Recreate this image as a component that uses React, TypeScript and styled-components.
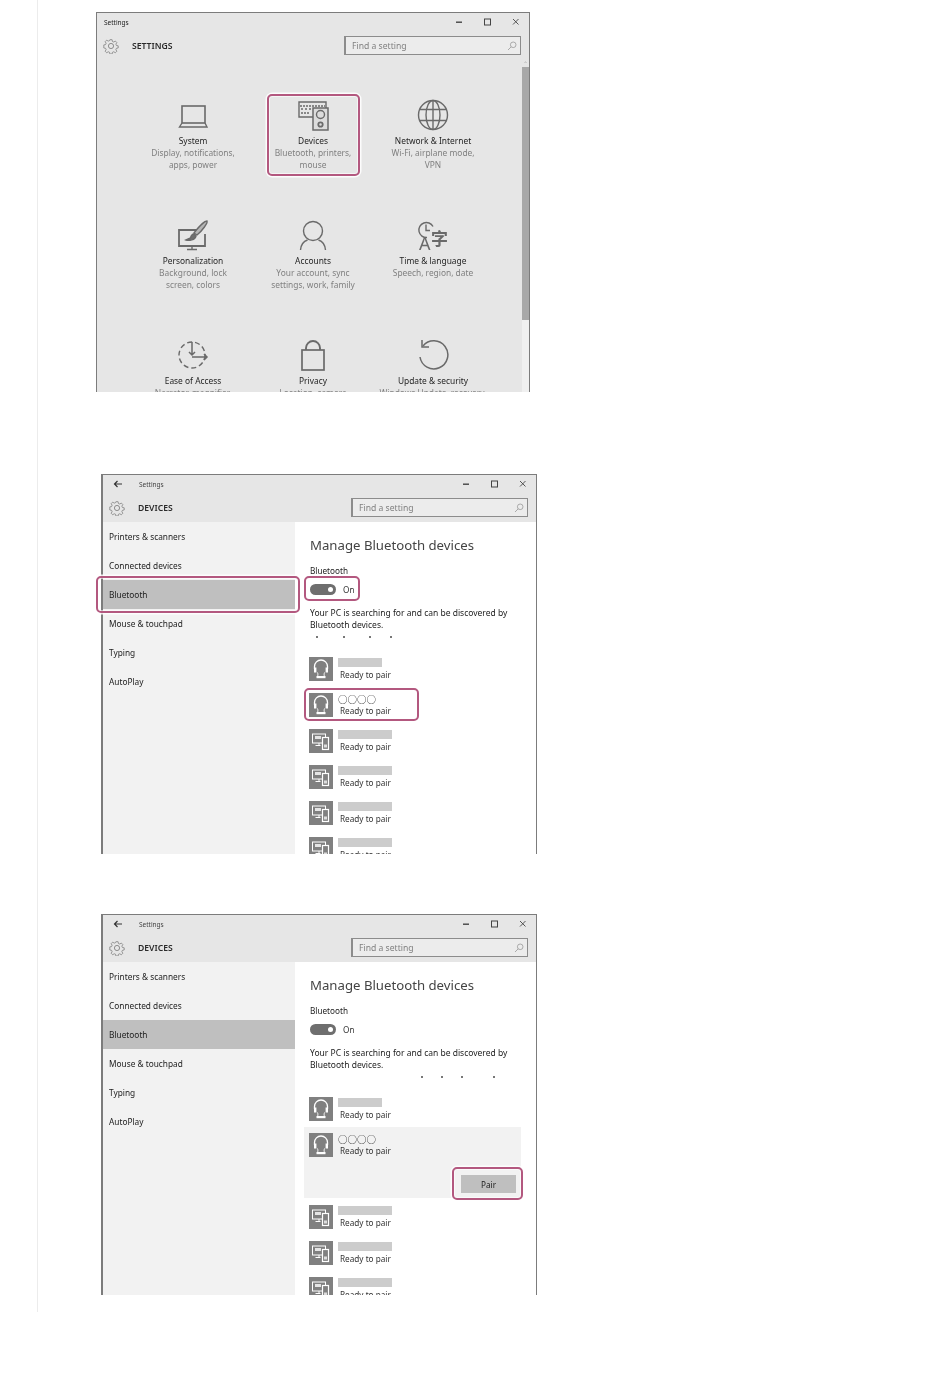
import styled, { createGlobalStyle } from "styled-components";
import { ReactNode } from "react";

const accent = "#b3587f";

const GlobalStyle = createGlobalStyle`
  * {
    box-sizing: border-box;
  }

  html,
  body {
    margin: 0;
    background: #fff;
    font-family: "Noto Sans", "Liberation Sans", sans-serif;
    color: #333;
  }
`;

type Setting = { title: string; lines: string[]; icon: ReactNode };

const GearIcon = () => (
  <svg width="16" height="16" viewBox="0 0 16 16" fill="none" stroke="#777" strokeWidth="0.8">
    <circle cx="8" cy="8" r="2.6" />
    <path d="M6.8 1h2.4l.4 2 1.5.6 1.7-1.1 1.7 1.7-1.1 1.7.6 1.5 2 .4v2.4l-2 .4-.6 1.5 1.1 1.7-1.7 1.7-1.7-1.1-1.5.6-.4 2H6.8l-.4-2-1.5-.6-1.7 1.1-1.7-1.7 1.1-1.7-.6-1.5-2-.4V6.8l2-.4.6-1.5-1.1-1.7 1.7-1.7 1.7 1.1 1.5-.6z" transform="translate(.8 .8) scale(.9)" />
  </svg>
);

const SearchIcon = () => (
  <svg width="10" height="10" viewBox="0 0 10 10" fill="none" stroke="#aaa" strokeWidth="1">
    <circle cx="6.2" cy="3.8" r="2.8" />
    <path d="M4.2 5.8 1 9" />
  </svg>
);

const MinimizeIcon = () => (
  <svg width="10" height="10" viewBox="0 0 10 10">
    <rect x="1" y="4.5" width="6" height="1.4" fill="#444" />
  </svg>
);

const MaximizeIcon = () => (
  <svg width="10" height="10" viewBox="0 0 10 10" fill="none" stroke="#444">
    <rect x="1.5" y="2" width="6" height="6" />
  </svg>
);

const CloseIcon = () => (
  <svg width="10" height="10" viewBox="0 0 10 10" fill="none" stroke="#444" strokeWidth="0.9">
    <path d="M2 2l5.5 5.5M7.5 2 2 7.5" />
  </svg>
);

const BackIcon = () => (
  <svg width="10" height="10" viewBox="0 0 10 10" fill="none" stroke="#333" strokeWidth="1.2">
    <path d="M9 5H1.5M4.5 2 1.5 5l3 3" />
  </svg>
);

const iconProps = {
  width: 32,
  height: 32,
  viewBox: "0 0 32 32",
  fill: "none",
  stroke: "#6a6a6a",
  strokeWidth: 1.4,
};

const LaptopIcon = () => (
  <svg {...iconProps}>
    <rect x="5" y="7" width="23" height="17" strokeWidth="1.6" />
    <path d="M5 24 2.5 28H30L28 24" />
  </svg>
);

const DevicesIcon = () => (
  <svg {...iconProps}>
    <path d="M16 18H2V3h27v6" strokeWidth="1.4" />
    <path d="M3 7h25M4 10h2M8 10h2M12 10h2M4 14h8" strokeDasharray="2 1" />
    <rect x="16" y="9" width="15" height="22" fill="#dcdcdc" strokeWidth="1.5" />
    <circle cx="23.5" cy="15.5" r="4" />
    <circle cx="23.5" cy="25.5" r="2.2" strokeWidth="1.8" />
  </svg>
);

const GlobeIcon = () => (
  <svg {...iconProps}>
    <circle cx="16" cy="16" r="14.5" />
    <ellipse cx="16" cy="16" rx="7" ry="14.5" />
    <path d="M16 1.5v29M2.5 10.5h27M2.5 21.5h27" />
  </svg>
);

const BrushIcon = () => (
  <svg {...iconProps}>
    <path d="M24 11H2v16h26V15" strokeWidth="1.8" />
    <path d="M15 27v3M10 30.5h10" />
    <path d="M30 2c1 2-5 10-10 14l-3-2C20 10 27 2 30 2z" fill="#b5b5b5" />
    <path d="M17 15c-2 0-3 2-3.500 4L9 21c3 1 9 0 10-4z" fill="#6f6f6f" />
  </svg>
);

const PersonIcon = () => (
  <svg {...iconProps}>
    <circle cx="16" cy="12" r="9.500" />
    <path d="M3.500 31c.5-6 4-9 7-10M28.500 31c-.5-6-4-9-7-10" />
  </svg>
);

const TimeLanguageIcon = () => (
  <svg {...iconProps}>
    <path d="M10 18.500a7.500 7.500 0 1 1 6-11" />
    <path d="M9 5.500v6h4" />
    <text x="2" y="31" fontSize="18" fill="#6a6a6a" stroke="none" fontFamily="Noto Sans, sans-serif">
      A
    </text>
    <text x="14" y="26" fontSize="17" fontWeight="700" fill="#6a6a6a" stroke="none" fontFamily="Noto Sans CJK SC, sans-serif">
      字
    </text>
  </svg>
);

const AccessIcon = () => (
  <svg {...iconProps}>
    <circle cx="15" cy="16" r="13" strokeDasharray="5 3" />
    <path d="M15 3v13M12 13l3 3 3-3M15 18h15M27 15l3 3-3 3" strokeWidth="1.500" />
  </svg>
);

const LockIcon = () => (
  <svg {...iconProps}>
    <rect x="5" y="11" width="22" height="20" strokeWidth="1.700" />
    <path d="M9 11V9a7 7 0 0 1 14 0v2" strokeWidth="1.900" />
  </svg>
);

const UpdateIcon = () => (
  <svg {...iconProps}>
    <path d="M6 7a14 14 0 1 1-3 11" strokeWidth="1.500" />
    <path d="M5 1v7h7" strokeWidth="1.500" />
  </svg>
);

const HeadsetIcon = () => (
  <svg width="24" height="24" viewBox="0 0 24 24" fill="none" stroke="#fff" strokeWidth="1.300">
    <path d="M5.500 12V9.500a6.500 6.500 0 0 1 13 0V12" />
    <rect x="5" y="10.500" width="2.400" height="5" fill="#fff" stroke="none" />
    <rect x="16.600" y="10.500" width="2.400" height="5" fill="#fff" stroke="none" />
    <path d="M8.500 15.500c.5 1.500.5 2.500 0 4M15.500 15.500c-.5 1.500-.5 2.500 0 4" strokeWidth="1" />
    <rect x="7.500" y="19" width="9" height="2.200" fill="#fff" stroke="none" />
  </svg>
);

const DeviceTileIcon = () => (
  <svg width="24" height="24" viewBox="0 0 24 24" fill="none" stroke="#fff">
    <rect x="3.500" y="5" width="13" height="9" />
    <rect x="6" y="7" width="6" height="3" fill="#e4e4e4" stroke="none" />
    <path d="M10 14v2M6.500 16.500h5" />
    <rect x="13.500" y="8.500" width="6" height="12" fill="#808080" strokeWidth="1.200" />
    <rect x="15" y="15.500" width="3" height="3" fill="#ddd" stroke="none" />
  </svg>
);

const settings: Setting[] = [
  { title: "System", lines: ["Display, notifications,", "apps, power"], icon: <LaptopIcon /> },
  { title: "Devices", lines: ["Bluetooth, printers,", "mouse"], icon: <DevicesIcon /> },
  { title: "Network & Internet", lines: ["Wi-Fi, airplane mode,", "VPN"], icon: <GlobeIcon /> },
  { title: "Personalization", lines: ["Background, lock", "screen, colors"], icon: <BrushIcon /> },
  { title: "Accounts", lines: ["Your account, sync", "settings, work, family"], icon: <PersonIcon /> },
  { title: "Time & language", lines: ["Speech, region, date"], icon: <TimeLanguageIcon /> },
  { title: "Ease of Access", lines: ["Narrator, magnifier,"], icon: <AccessIcon /> },
  { title: "Privacy", lines: ["Location, camera"], icon: <LockIcon /> },
  { title: "Update & security", lines: ["Windows Update, recovery,"], icon: <UpdateIcon /> },
];

const menu = ["Printers & scanners", "Connected devices", "Bluetooth", "Mouse & touchpad", "Typing", "AutoPlay"];

const WindowChrome = ({ title, heading, back }: { title: string; heading: string; back?: boolean }) => (
  <Chrome>
    <TitleBar>
      {back && (
        <BackButton>
          <BackIcon />
        </BackButton>
      )}
      <TitleText $back={back}>{title}</TitleText>
      <Controls>
        <MinimizeIcon />
        <MaximizeIcon />
        <CloseIcon />
      </Controls>
    </TitleBar>
    <HeaderRow>
      <GearSlot>
        <GearIcon />
      </GearSlot>
      <HeaderText>{heading}</HeaderText>
      <SearchBox>
        Find a setting
        <SearchIcon />
      </SearchBox>
    </HeaderRow>
  </Chrome>
);

const Device = ({ kind, name, short }: { kind: "headset" | "device"; name?: string; short?: boolean }) => (
  <DeviceRow>
    <DeviceIconBox>{kind === "headset" ? <HeadsetIcon /> : <DeviceTileIcon />}</DeviceIconBox>
    <DeviceText>
      {name ? <DeviceName>{name}</DeviceName> : <NameBar $short={short} />}
      <DeviceStatus>Ready to pair</DeviceStatus>
    </DeviceText>
  </DeviceRow>
);

const DevicesPane = ({ dots, expanded }: { dots: number[]; expanded?: boolean }) => (
  <Panes>
    <Sidebar>
      {menu.map((item) => (
        <MenuItem key={item} $active={item === "Bluetooth"}>
          {item}
        </MenuItem>
      ))}
    </Sidebar>
    <Content>
      <Heading>Manage Bluetooth devices</Heading>
      <FieldLabel>Bluetooth</FieldLabel>
      <ToggleRow>
        <ToggleTrack>
          <ToggleKnob />
        </ToggleTrack>
        <ToggleLabel>On</ToggleLabel>
      </ToggleRow>
      <Paragraph>
        Your PC is searching for and can be discovered by
        <br />
        Bluetooth devices.
      </Paragraph>
      <Dots>
        {dots.map((left) => (
          <Dot key={left} $left={left} />
        ))}
      </Dots>
      <DeviceList>
        <Device kind="headset" short />
        {expanded ? (
          <ExpandedRow>
            <Device kind="headset" name="○○○○" />
            <PairRow>
              <PairButton>Pair</PairButton>
            </PairRow>
          </ExpandedRow>
        ) : (
          <Device kind="headset" name="○○○○" />
        )}
        <Device kind="device" />
        <Device kind="device" />
        {!expanded && <Device kind="device" />}
        <Device kind="device" />
      </DeviceList>
    </Content>
  </Panes>
);

const App = () => {
  return (
    <Page>
      <GlobalStyle />
      <Rail>
        <Window $width={434}>
          <WindowClip>
            <WindowChrome title="Settings" heading="SETTINGS" />
            <SettingsBody>
              <SettingsGrid>
                {settings.map((s) => (
                  <Tile key={s.title}>
                    {s.icon}
                    <TileTitle>{s.title}</TileTitle>
                    {s.lines.map((line) => (
                      <TileLine key={line}>{line}</TileLine>
                    ))}
                  </Tile>
                ))}
              </SettingsGrid>
              <Scrollbar>
                <ScrollArrow>⌃</ScrollArrow>
                <ScrollThumb />
                <ScrollRest />
              </Scrollbar>
            </SettingsBody>
          </WindowClip>
          <Highlight $left={170} $top={81} $width={93} $height={82} />
        </Window>

        <Window $width={436} $marginTop={82} $marginLeft={5} $thickLeft>
          <WindowClip>
            <WindowChrome title="Settings" heading="DEVICES" back />
            <DevicesPane dots={[316, 343, 369, 390]} />
          </WindowClip>
          <Highlight $left={-7} $top={101} $width={204} $height={37} />
          <Highlight $left={201} $top={101} $width={56} $height={25} />
          <Highlight $left={201} $top={213} $width={115} $height={33} />
        </Window>

        <Window $width={436} $marginTop={60} $marginLeft={5} $thickLeft $height={381}>
          <WindowClip>
            <WindowChrome title="Settings" heading="DEVICES" back />
            <DevicesPane dots={[421, 441, 461, 493]} expanded />
          </WindowClip>
          <Highlight $left={349} $top={252} $width={71} $height={33} />
        </Window>
      </Rail>
    </Page>
  );
};

export default App;

const Page = styled.div`
  width: 950px;
  height: 1379px;
  padding-left: 37px;
`;

const Rail = styled.div`
  height: 1312px;
  padding: 12px 0 0 58px;
  border-left: 1px solid #ececec;
`;

const Window = styled.div<{
  $width: number;
  $height?: number;
  $marginTop?: number;
  $marginLeft?: number;
  $thickLeft?: boolean;
}>`
  position: relative;
  width: ${(p) => p.$width}px;
  height: ${(p) => p.$height ?? 380}px;
  margin-top: ${(p) => p.$marginTop ?? 0}px;
  margin-left: ${(p) => p.$marginLeft ?? 0}px;
  border: 1px solid #7c7c7c;
  border-left-width: ${(p) => (p.$thickLeft ? 2 : 1)}px;
  border-bottom: none;
  background: #e6e6e6;
  filter: blur(0.45px);
`;

const WindowClip = styled.div`
  height: 100%;
  overflow: hidden;
`;

const Highlight = styled.div<{ $left: number; $top: number; $width: number; $height: number }>`
  position: absolute;
  left: ${(p) => p.$left}px;
  top: ${(p) => p.$top}px;
  width: ${(p) => p.$width}px;
  height: ${(p) => p.$height}px;
  border: 2px solid ${accent};
  border-radius: 5px;
  box-shadow: 0 0 0 1.5px rgba(255, 255, 255, 0.85), inset 0 0 0 1px rgba(255, 255, 255, 0.6);
`;

const Chrome = styled.div`
  height: 47px;
  background: #e6e6e6;
`;

const TitleBar = styled.div`
  display: flex;
  align-items: center;
  height: 18px;
  padding-left: 7px;
`;

const BackButton = styled.div`
  display: flex;
  width: 29px;
  padding-left: 3px;
`;

const TitleText = styled.div<{ $back?: boolean }>`
  font-size: 6.5px;
  color: ${(p) => (p.$back ? "#444" : "#222")};
`;

const Controls = styled.div`
  display: flex;
  gap: 18px;
  margin-left: auto;
  padding-right: 8px;
`;

const HeaderRow = styled.div`
  display: flex;
  align-items: center;
  height: 29px;
  padding: 0 8px 0 6px;
`;

const GearSlot = styled.div`
  display: flex;
  width: 29px;
`;

const HeaderText = styled.div`
  font-size: 8.6px;
  font-weight: 600;
  color: #2a2a2a;
`;

const SearchBox = styled.div`
  display: flex;
  align-items: center;
  justify-content: space-between;
  width: 177px;
  height: 19px;
  margin-left: auto;
  padding: 0 3px 0 6px;
  border: 1px solid #8c8c8c;
  border-left-width: 2px;
  background: #ececec;
  font-size: 8.6px;
  color: #808080;
`;

const SettingsBody = styled.div`
  display: flex;
  height: 100%;
`;

const SettingsGrid = styled.div`
  display: grid;
  grid-template-columns: repeat(3, 120px);
  grid-auto-rows: 120px;
  flex: 1;
  padding: 39px 0 0 36px;
`;

const Tile = styled.div`
  display: flex;
  flex-direction: column;
  align-items: center;
  font-size: 8.4px;
  line-height: 12px;
  white-space: nowrap;
`;

const TileTitle = styled.div`
  margin-top: 4px;
  color: #1f1f1f;
`;

const TileLine = styled.div`
  color: #808080;
`;

const Scrollbar = styled.div`
  display: flex;
  flex-direction: column;
  flex-shrink: 0;
  width: 7px;
`;

const ScrollArrow = styled.div`
  height: 7px;
  font-size: 6px;
  line-height: 8px;
  text-align: center;
  color: #aaa;
`;

const ScrollThumb = styled.div`
  height: 253px;
  background: #a8a8a8;
`;

const ScrollRest = styled.div`
  flex: 1;
  background: #f0f0f0;
`;

const Panes = styled.div`
  display: flex;
  height: 100%;
`;

const Sidebar = styled.div`
  width: 192px;
  flex-shrink: 0;
  background: #f2f2f2;
`;

const MenuItem = styled.div<{ $active?: boolean }>`
  display: flex;
  align-items: center;
  height: 29px;
  padding-left: 6px;
  background: ${(p) => (p.$active ? "#bfbfbf" : "transparent")};
  font-size: 8.3px;
  color: #222;
`;

const Content = styled.div`
  flex: 1;
  padding: 13px 0 0 15px;
  background: #fff;
`;

const Heading = styled.div`
  font-size: 13.2px;
  line-height: 20px;
  color: #444;
  white-space: nowrap;
`;

const FieldLabel = styled.div`
  margin-top: 10px;
  font-size: 8.2px;
  line-height: 12px;
  color: #222;
`;

const ToggleRow = styled.div`
  display: flex;
  align-items: center;
  gap: 7px;
  margin-top: 7px;
  height: 11px;
`;

const ToggleTrack = styled.div`
  display: flex;
  align-items: center;
  justify-content: flex-end;
  width: 26px;
  height: 11px;
  padding-right: 3px;
  border-radius: 6px;
  background: #6e6e6e;
`;

const ToggleKnob = styled.div`
  width: 5px;
  height: 5px;
  border-radius: 50%;
  background: #fff;
`;

const ToggleLabel = styled.div`
  font-size: 8.2px;
  color: #333;
`;

const Paragraph = styled.div`
  margin-top: 12px;
  font-size: 8.5px;
  line-height: 12px;
  color: #222;
  white-space: nowrap;
`;

const Dots = styled.div`
  position: relative;
  height: 4px;
  margin-top: 4px;
`;

const Dot = styled.i<{ $left: number }>`
  position: absolute;
  top: 1px;
  left: ${(p) => p.$left - 310}px;
  width: 1.5px;
  height: 1.5px;
  background: #777;
`;

const DeviceList = styled.div`
  display: flex;
  flex-direction: column;
  gap: 12px;
  margin: 18px 0 0 -1px;
`;

const DeviceRow = styled.div`
  display: flex;
  flex-shrink: 0;
  gap: 5px;
  height: 24px;
`;

const DeviceIconBox = styled.div`
  display: flex;
  width: 24px;
  height: 24px;
  background: #808080;
`;

const DeviceText = styled.div`
  display: flex;
  flex-direction: column;
`;

const NameBar = styled.div<{ $short?: boolean }>`
  width: ${(p) => (p.$short ? 44 : 54)}px;
  height: 9px;
  margin: 1px 0 2px;
  background: #ccc;
`;

const DeviceName = styled.div`
  height: 12px;
  font-family: "Noto Sans CJK JP", sans-serif;
  font-size: 9.5px;
  line-height: 12px;
  color: #222;
`;

const DeviceStatus = styled.div`
  padding-left: 2px;
  font-size: 8.2px;
  line-height: 12px;
  color: #333;
  white-space: nowrap;
`;

const ExpandedRow = styled.div`
  display: flex;
  flex-direction: column;
  flex-shrink: 0;
  width: 217px;
  height: 71px;
  margin: -6px 0 -5px -5px;
  padding: 6px 5px 0;
  background: #f2f2f2;
`;

const PairRow = styled.div`
  display: flex;
  justify-content: flex-end;
  margin-top: 18px;
`;

const PairButton = styled.div`
  display: flex;
  align-items: center;
  justify-content: center;
  width: 55px;
  height: 18px;
  background: #bfbfbf;
  font-size: 8.2px;
  color: #222;
`;
